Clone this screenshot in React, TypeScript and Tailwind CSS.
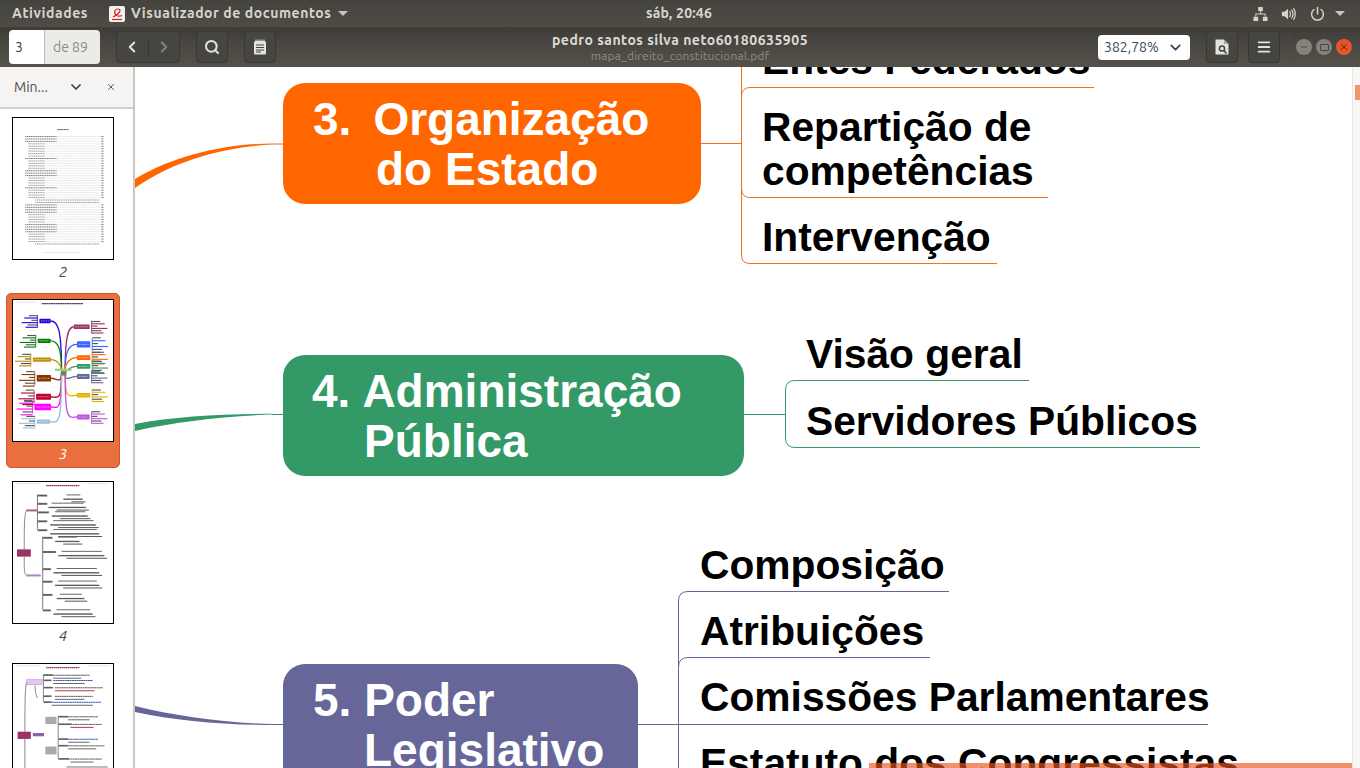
import { ChevronDown, ChevronLeft, ChevronRight, Search, Menu, X, Minus } from 'lucide-react';

const font = { fontFamily: '"Liberation Sans", Arial, sans-serif' };

const mapNodes = [
  { x: 118, y: 85, w: 34, h: 13, c: '#2a00e0', side: 'l', cy: 240 },
  { x: 113, y: 145, w: 39, h: 13, c: '#008000', side: 'l', cy: 240 },
  { x: 98, y: 202, w: 55, h: 13, c: '#c09000', side: 'l', cy: 240 },
  { x: 110, y: 255, w: 43, h: 20, c: '#8a3500', side: 'l', cy: 245 },
  { x: 108, y: 312, w: 45, h: 18, c: '#c00030', side: 'l', cy: 250 },
  { x: 103, y: 342, w: 50, h: 20, c: '#ff00ff', side: 'l', cy: 250 },
  { x: 110, y: 390, w: 40, h: 13, c: '#99bbdd', side: 'l', cy: 252 },
  { x: 222, y: 102, w: 48, h: 14, c: '#993366', side: 'r', cy: 235 },
  { x: 232, y: 153, w: 40, h: 19, c: '#3366ff', side: 'r', cy: 238 },
  { x: 232, y: 195, w: 40, h: 15, c: '#ff6600', side: 'r', cy: 240 },
  { x: 232, y: 222, w: 40, h: 14, c: '#339966', side: 'r', cy: 243 },
  { x: 232, y: 252, w: 38, h: 15, c: '#666699', side: 'r', cy: 248 },
  { x: 232, y: 310, w: 40, h: 13, c: '#e6b000', side: 'r', cy: 252 },
  { x: 232, y: 375, w: 38, h: 15, c: '#c050e0', side: 'r', cy: 255 },
];

function mapLines(n: (typeof mapNodes)[number]) {
  const rows = [-16, -9, -2, 5, 12, 19];
  const widths = [26, 40, 18, 48, 30, 36];
  return rows.map((dy, i) => {
    const y = n.y + n.h / 2 + dy * (n.h > 15 ? 1.25 : 1);
    const w = widths[i];
    return n.side === 'l' ? (
      <line key={i} x1={n.x - 6 - w} x2={n.x - 6} y1={y} y2={y} stroke={i % 2 ? n.c : '#555'} strokeWidth="3.4" />
    ) : (
      <line key={i} x1={n.x + n.w + 6} x2={n.x + n.w + 6 + w} y1={y} y2={y} stroke={i % 2 ? n.c : '#555'} strokeWidth="3.4" />
    );
  });
}

function ThumbMap() {
  return (
    <svg width="100" height="141" viewBox="38 28 303 427" className="bg-white block blur-[0.35px]">
      <line x1="125" x2="250" y1="39" y2="39" stroke="#444" strokeWidth="3.5" strokeDasharray="6 1" />
      <line x1="48" x2="108" y1="34" y2="34" stroke="#ccc" strokeWidth="1.5" />
      {mapNodes.map((n, i) => {
        const ex = n.side === 'l' ? n.x + n.w : n.x;
        const cx = n.side === 'l' ? 185 : 196;
        const midY = n.y + n.h / 2;
        return (
          <g key={i}>
            <path d={`M${ex} ${midY} C ${cx - (n.side === 'l' ? 12 : -12)} ${midY}, ${cx} ${midY + 20}, ${cx} ${n.cy}`} fill="none" stroke={n.c} strokeWidth="4" />
            <rect x={n.x} y={n.y} width={n.w} height={n.h} rx="2" fill={n.c} />
            <line x1={n.x + 5} x2={n.x + n.w - 5} y1={midY} y2={midY} stroke="#fff" strokeOpacity="0.65" strokeWidth="2.4" strokeDasharray="5 2" />
            <line x1={n.side === 'l' ? n.x - 6 : n.x + n.w + 6} x2={n.side === 'l' ? n.x - 6 : n.x + n.w + 6} y1={midY - 18} y2={midY + 20} stroke={n.c} strokeWidth="2.5" />
            {mapLines(n)}
          </g>
        );
      })}
      <rect x="165" y="236" width="50" height="7" fill="#a0cc88" />
      <rect x="184" y="243" width="16" height="14" fill="#6a8a50" />
    </svg>
  );
}

const tocRows = [
  [75, 0], [75, 0], [75, 0], [85, 1], [85, 1], [85, 1], [85, 1], [85, 1], [85, 1], [75, 0], [85, 1], [85, 1], [85, 1], [85, 1],
  [75, 0], [75, 0], [75, 0], [85, 1], [85, 1], [85, 1], [85, 1], [75, 0], [85, 1], [85, 1], [85, 1], [85, 1], [105, 2], [105, 2],
  [75, 0], [75, 0], [75, 0], [75, 0], [85, 1], [85, 1], [85, 1], [85, 1], [75, 0], [75, 0], [75, 0], [75, 0], [85, 1], [85, 1], [85, 1], [85, 1], [105, 2],
];

function ThumbToc() {
  return (
    <svg width="100" height="141" viewBox="38 22 303 425" className="bg-white block blur-[0.25px]">
      <line x1="172" x2="207" y1="56" y2="56" stroke="#555" strokeWidth="3" strokeDasharray="4 1" />
      {tocRows.map(([x, kind], i) => {
        const y = 77 + i * 7.4;
        return (
          <g key={i}>
            <line x1={x} x2={kind === 2 ? 300 : kind === 1 ? 135 : 170} y1={y} y2={y} stroke={kind === 0 ? '#555' : '#808080'} strokeWidth="2.4" strokeDasharray="4 1.5" />
            {kind !== 2 && <line x1={kind === 1 ? 135 : 170} x2="302" y1={y} y2={y} stroke="#aaa" strokeWidth="1.8" strokeDasharray="1.2 2" />}
            {kind !== 2 && <line x1="306" x2="312" y1={y} y2={y} stroke="#555" strokeWidth="2.4" />}
          </g>
        );
      })}
      <line x1="128" x2="240" y1="428" y2="428" stroke="#bbb" strokeWidth="1.6" strokeDasharray="2 1" />
    </svg>
  );
}

function Branch({ x, y, w, h = 6 }: { x: number; y: number; w: number; h?: number }) {
  return (
    <g>
      <rect x={x} y={y} width={w} height={h} fill="#777" />
      <line x1={x + 3} x2={x + w - 3} y1={y + h / 2} y2={y + h / 2} stroke="#333" strokeWidth="1.8" strokeDasharray="3 1" />
    </g>
  );
}

const p4Rows = [
  [112, 57, 30, 190, 60], [112, 82, 30, 145, 115], [112, 108, 35, 155, 110], [112, 135, 30, 150, 140], [112, 162, 30, 150, 150],
  [128, 185, 30, 165, 75], [128, 228, 40, 175, 140], [128, 280, 25, 160, 140], [128, 318, 30, 165, 135], [128, 358, 30, 170, 85], [128, 405, 25, 160, 120],
];

function ThumbFour() {
  return (
    <svg width="100" height="141" viewBox="38 20 303 425" className="bg-white block blur-[0.35px]">
      <line x1="138" x2="240" y1="30" y2="30" stroke="#a03070" strokeWidth="3.5" strokeDasharray="5 1" />
      <line x1="48" x2="118" y1="24" y2="24" stroke="#ccc" strokeWidth="1.5" />
      <line x1="265" x2="330" y1="24" y2="24" stroke="#ccc" strokeWidth="1.5" />
      <path d="M72 222 C 72 160, 72 108, 80 105 M72 245 C 72 290, 72 300, 80 302" fill="none" stroke="#888" strokeWidth="3" />
      <path d="M112 57 V162 M128 185 V405" fill="none" stroke="#777" strokeWidth="3" />
      <rect x="50" y="223" width="42" height="22" fill="#993366" />
      <rect x="78" y="102" width="34" height="6" fill="#a06090" />
      <rect x="78" y="299" width="44" height="6" fill="#b080c0" />
      {p4Rows.map(([x, y, w, x2, w2], i) => (
        <g key={i}>
          <Branch x={x} y={y} w={w} />
          <Branch x={x2} y={y + 12} w={w2} h={4} />
          <line x1={x2 + 10} x2={x2 + w2 - 8} y1={y + 1} y2={y + 1} stroke="#666" strokeWidth="3" />
          <line x1={x2 + 25} x2={x2 + w2 + 8 > 325 ? 325 : x2 + w2 + 8} y1={y + 22} y2={y + 22} stroke="#555" strokeWidth="3" />
        </g>
      ))}
    </svg>
  );
}

const p5Rows = [
  [130, 596, 30, 160, 110], [130, 612, 25, 160, 120], [130, 634, 30, 165, 145], [130, 660, 25, 165, 115], [130, 678, 25, 155, 150],
  [175, 722, 30, 205, 90], [175, 745, 40, 212, 95], [175, 790, 30, 205, 90], [175, 810, 30, 205, 110], [175, 850, 35, 212, 95],
];

function ThumbFive() {
  return (
    <svg width="100" height="104" viewBox="38 565 303 315" className="bg-white block blur-[0.35px]">
      <line x1="138" x2="240" y1="576" y2="576" stroke="#a03070" strokeWidth="3.5" strokeDasharray="5 1" />
      <line x1="48" x2="118" y1="570" y2="570" stroke="#ccc" strokeWidth="1.5" />
      <line x1="265" x2="330" y1="570" y2="570" stroke="#ccc" strokeWidth="1.5" />
      <path d="M74 770 C 74 700, 74 630, 80 620 M74 792 V880 M105 630 C 105 650, 108 660, 112 668 M130 596 V678 M175 722 V850" fill="none" stroke="#888" strokeWidth="3" />
      <rect x="52" y="770" width="40" height="22" fill="#993366" />
      <rect x="80" y="612" width="46" height="16" fill="#e0c8f0" stroke="#a060c0" />
      <rect x="98" y="774" width="34" height="10" fill="#9060b0" />
      <rect x="136" y="725" width="34" height="22" fill="#aaa" />
      <rect x="136" y="815" width="34" height="24" fill="#aaa" />
      {p5Rows.map(([x, y, w, x2, w2], i) => (
        <g key={i}>
          <Branch x={x} y={y} w={w} h={5} />
          <line x1={x2} x2={x2 + w2} y1={y + 3} y2={y + 3} stroke={i % 3 === 1 ? '#3050c0' : '#555'} strokeWidth="3" strokeDasharray="6 1" />
          <line x1={x2} x2={x2 + w2 - 25} y1={y + 12} y2={y + 12} stroke={i % 4 === 2 ? '#c03050' : '#666'} strokeWidth="3" />
        </g>
      ))}
      <line x1="200" x2="325" y1="877" y2="877" stroke="#777" strokeWidth="3" />
    </svg>
  );
}

function NetworkIcon() {
  return (
    <svg width="15" height="16" viewBox="0 0 16 16" fill="#d6d3cb">
      <rect x="5.5" y="0.5" width="5" height="4.5" />
      <rect x="0.5" y="11" width="5" height="4.5" />
      <rect x="10.5" y="11" width="5" height="4.5" />
      <path d="M7.5 5h1v2.5H13.5V11h-1V8.5H3.5V11h-1V7.5h5z" />
    </svg>
  );
}

function VolumeIcon() {
  return (
    <svg width="15" height="16" viewBox="0 0 17 16" fill="none">
      <path d="M1 5.5h3L8 2v12L4 10.5H1z" fill="#d6d3cb" />
      <path d="M10 5c1 1.6 1 4.4 0 6M12.2 3.5c1.7 2.5 1.7 6.5 0 9M14.4 2c2.3 3.4 2.3 8.6 0 12" stroke="#d6d3cb" strokeWidth="1.4" strokeLinecap="round" />
    </svg>
  );
}

function PowerIcon() {
  return (
    <svg width="15" height="16" viewBox="0 0 16 16" fill="none" stroke="#d6d3cb" strokeWidth="1.6" strokeLinecap="round">
      <path d="M8 1v7" />
      <path d="M4.2 3.2a6.3 6.3 0 1 0 7.6 0" />
    </svg>
  );
}

function Caret() {
  return <span className="inline-block w-0 h-0 border-x-[5px] border-x-transparent border-t-[5px] border-t-[#c9c6bf]" />;
}

function NotesIcon() {
  return (
    <svg width="14" height="16" viewBox="0 0 14 16" fill="none">
      <rect x="1" y="2" width="12" height="13.5" rx="1.5" fill="#e4e2dc" />
      <path d="M3 0.5v3M5 0.5v3M7 0.5v3M9 0.5v3M11 0.5v3" stroke="#e4e2dc" strokeWidth="1" />
      <path d="M3 6h8M3 8.5h8M3 11h8M3 13h5" stroke="#45433d" strokeWidth="1" />
    </svg>
  );
}

function RecentIcon() {
  return (
    <svg width="14" height="16" viewBox="0 0 14 16" fill="none">
      <path d="M0.5 0.5h8.5l4.5 4.5v10.5H.5z" fill="#e4e2dc" />
      <path d="M9 0.5v4.5h4.5" fill="#a5a39c" />
      <circle cx="7" cy="9.5" r="2.6" stroke="#45433d" strokeWidth="1.5" />
      <path d="M9 11.5l2.5 3" stroke="#45433d" strokeWidth="1.6" />
    </svg>
  );
}

function AppLogo() {
  return (
    <span className="w-[16px] h-[16px] bg-[#f4f2ee] rounded-[2px] flex items-center justify-center">
      <svg width="14" height="14" viewBox="0 0 14 14" fill="none" stroke="#d3201f" strokeWidth="1.2">
        <path d="M3 10C6 8.5 10 5.5 10 3.5 10 1.5 6 1.5 5 3.5 4 5.5 5 8 8 9c1.5.5 3 0 4-.5" />
        <path d="M2 12.5h10" />
      </svg>
    </span>
  );
}

const toolBtn = 'h-[32px] flex items-center justify-center border border-[#3a3833] rounded-[4px] bg-[#47453f]';
const subTopic = 'absolute text-[40.75px] leading-[44px] whitespace-nowrap';

export default function App() {
  return (
    <div className="w-[1360px] h-[768px] flex flex-col overflow-hidden bg-white" style={{ fontFamily: 'Ubuntu, "Open Sans", "Noto Sans", sans-serif' }}>
      {/* Top bar */}
      <div className="h-[27px] shrink-0 flex items-center justify-between bg-gradient-to-b from-[#45433d] to-[#4e4c45] text-[#d8d5cd] text-[14px] font-semibold">
        <div className="flex items-center">
          <span className="ml-3 tracking-[0.6px]">Atividades</span>
          <span className="ml-[21px]"><AppLogo /></span>
          <span className="ml-1.5 tracking-[0.57px]">Visualizador de documentos</span>
          <span className="ml-1.5 flex"><Caret /></span>
        </div>
        <span className="absolute left-[646px] text-[14px] font-semibold tracking-[0.2px]">sáb, 20:46</span>
        <div className="flex items-center pr-[15px]">
          <NetworkIcon />
          <span className="ml-[13px] flex"><VolumeIcon /></span>
          <span className="ml-[14px] flex"><PowerIcon /></span>
          <span className="ml-[10px] flex"><Caret /></span>
        </div>
      </div>

      {/* Toolbar */}
      <div className="h-[40px] shrink-0 flex items-center bg-gradient-to-b from-[#3f3d38] to-[#55524b] relative">
        <div className="ml-[9px] flex h-[34px] w-[91px] rounded-[4px] overflow-hidden text-[14px]">
          <span className="w-[36px] bg-white text-[#3d3d3d] pl-1.5 flex items-center border-r border-[#bbb]">3</span>
          <span className="flex-1 bg-[#ecebe8] text-[#8b8b88] pl-2 flex items-center">de 89</span>
        </div>
        <div className={`${toolBtn} ml-4 w-[64px]`}>
          <span className="flex-1 flex justify-center border-r border-[#3a3833]"><ChevronLeft size={18} strokeWidth={2.6} className="text-[#e4e2dc]" /></span>
          <span className="flex-1 flex justify-center"><ChevronRight size={18} strokeWidth={2.6} className="text-[#85837d]" /></span>
        </div>
        <div className={`${toolBtn} ml-4 w-[32px]`}><Search size={16} strokeWidth={3} className="text-[#e4e2dc]" /></div>
        <div className={`${toolBtn} ml-4 w-[32px]`}><NotesIcon /></div>

        <div className="absolute left-[430px] w-[500px] top-0 h-full flex flex-col items-center justify-center leading-none">
          <span className="text-[14px] font-semibold text-[#dedbd3] tracking-[0.5px]">pedro santos silva neto60180635905</span>
          <span className="text-[12px] text-[#8f8d85] mt-[3px] tracking-[0.13px]">mapa_direito_constitucional.pdf</span>
        </div>

        <div className="ml-auto flex items-center">
          <div className="w-[92px] h-[25px] bg-white rounded-[4px] flex items-center text-[14px] text-[#3d4a5c] pl-1.5">
            382,78%
            <ChevronDown size={17} strokeWidth={2.6} className="ml-auto mr-1.5 text-[#444]" />
          </div>
          <div className={`${toolBtn} ml-4 w-[32px]`}><RecentIcon /></div>
          <div className={`${toolBtn} ml-[10px] w-[32px]`}><Menu size={16} strokeWidth={2.8} className="text-[#e4e2dc]" /></div>
          <span className="ml-[9px] w-px h-[28px] bg-[#4a4843]" />
          <div className="ml-[6px] mr-2 flex items-center gap-[4px]">
            <span className="w-4 h-4 rounded-full bg-[#84827b] flex items-center justify-center"><Minus size={10} className="text-[#47453f]" /></span>
            <span className="w-4 h-4 rounded-full bg-[#84827b] flex items-center justify-center"><span className="w-[9px] h-[7px] border border-[#47453f] rounded-[1px]" /></span>
            <span className="w-4 h-4 rounded-full bg-[#e2552b] flex items-center justify-center"><X size={10} strokeWidth={2.4} className="text-[#5c2410]" /></span>
          </div>
        </div>
      </div>

      <div className="flex-1 flex min-h-0">
        {/* Thumbnail sidebar */}
        <aside className="w-[135px] shrink-0 bg-[#f5f4f2] border-r-2 border-[#c8c7c4] flex flex-col overflow-hidden">
          <div className="h-[42px] shrink-0 flex items-center border-b-2 border-[#d0cfcc] text-[14px] text-[#4c4c4c]">
            <span className="ml-[14px]">Min...</span>
            <ChevronDown size={16} strokeWidth={2.6} className="ml-[20px] text-[#3d3d3d]" />
            <X size={10} strokeWidth={2} className="ml-[22px] text-[#3d3d3d]" />
          </div>
          <div className="flex flex-col items-center pt-2 bg-white flex-1 pr-[7px]">
            <div className="border border-black"><ThumbToc /></div>
            <span className="mt-px h-[22px] text-[15px] italic text-[#444]">2</span>
            <div className="mt-[10px] bg-[#e9703e] rounded-[5px] border border-[#c85a2e] w-[114px] pt-[5px] pb-[3px] flex flex-col items-center">
              <div className="border border-black"><ThumbMap /></div>
              <span className="mt-px h-[21px] leading-[21px] text-[15px] italic text-white">3</span>
            </div>
            <div className="mt-[13px] border border-black"><ThumbFour /></div>
            <span className="mt-px h-[22px] text-[15px] italic text-[#444]">4</span>
            <div className="mt-[16px] border border-black border-b-0"><ThumbFive /></div>
          </div>
        </aside>

        {/* Document */}
        <main className="relative flex-1 overflow-hidden bg-white text-black font-bold" style={font}>
          <svg className="absolute inset-0" width="1225" height="701" viewBox="135 67 1225 701" fill="none">
            <path d="M135 179 C 175 155, 225 144, 272 143.5 L272 144.5 C 225 147, 175 160, 135 188 Z" fill="#ff6600" />
            <path d="M272 144H283M701 143.5H741.5" stroke="#f0701f" strokeWidth="1" />
            <path d="M741.5 67V255Q741.5 263.5 750 263.5H997M741.5 97Q741.5 87.5 750 87.5H1094M741.5 188Q741.5 197.5 750 197.5H1048" stroke="#f0701f" strokeWidth="1" />

            <path d="M135 424 C 175 416, 225 414, 272 413.8 L272 414.6 C 225 416, 175 422, 135 431 Z" fill="#339966" />
            <path d="M272 414.5H283M744 414.5H785.5" stroke="#339966" strokeWidth="1" />
            <path d="M785.5 390Q785.5 380.5 795 380.5H1029M785.5 390V438Q785.5 447.5 795 447.5H1200" stroke="#339966" strokeWidth="1" />

            <path d="M135 706 C 175 716, 225 723, 272 724 L272 725 C 225 725, 175 721, 135 712 Z" fill="#666699" />
            <path d="M272 724.5H283M638 724.5H1208" stroke="#666699" strokeWidth="1" />
            <path d="M678.5 768V601Q678.5 591.5 688 591.5H949M678.5 667Q678.5 657.5 688 657.5H930" stroke="#666699" strokeWidth="1" />
          </svg>

          {/* Central topics */}
          <div className="absolute left-[148px] top-[16px] w-[418px] h-[121px] rounded-[22px] bg-[#ff6600] text-white text-[46px] leading-[50px] pt-[11px]">
            <div className="pl-[30px]">3.<span className="ml-[22px]">Organização</span></div>
            <div className="pl-[93px]">do Estado</div>
          </div>
          <div className="absolute left-[148px] top-[288px] w-[461px] h-[121px] rounded-[22px] bg-[#339966] text-white text-[46px] leading-[50px] pt-[11px]">
            <div className="pl-[29px]">4.<span className="ml-[12px]">Administração</span></div>
            <div className="pl-[81px]">Pública</div>
          </div>
          <div className="absolute left-[148px] top-[597px] w-[355px] h-[140px] rounded-[22px] bg-[#666699] text-white text-[46px] leading-[50px] pt-[11px]">
            <div className="pl-[30px]">5. Poder</div>
            <div className="pl-[81px]">Legislativo</div>
          </div>

          {/* Sub topics */}
          <div className={`${subTopic} left-[627px] top-[-29px]`}>Entes Federados</div>
          <div className={`${subTopic} left-[627px] top-[38px]`}>Repartição de<br />competências</div>
          <div className={`${subTopic} left-[627px] top-[148px]`}>Intervenção</div>
          <div className={`${subTopic} left-[671px] top-[265px]`}>Visão geral</div>
          <div className={`${subTopic} left-[671px] top-[332px]`}>Servidores Públicos</div>
          <div className={`${subTopic} left-[565px] top-[476px]`}>Composição</div>
          <div className={`${subTopic} left-[565px] top-[542px]`}>Atribuições</div>
          <div className={`${subTopic} left-[565px] top-[608px]`}>Comissões Parlamentares</div>
          <div className={`${subTopic} left-[565px] top-[674px]`}>Estatuto dos Congressistas</div>

          {/* Overlay scrollbars */}
          <div className="absolute right-0 top-0 bottom-0 w-[8px] bg-[#f8f8f7] border-l border-[#e6e6e4]">
            <div className="ml-[2px] mt-[18px] h-[15px] w-[5px] bg-[#f2956f]" />
          </div>
          <div className="absolute left-[734px] right-[8px] bottom-0 h-[5px] bg-[#e9541f]/65" />
        </main>
      </div>
    </div>
  );
}
